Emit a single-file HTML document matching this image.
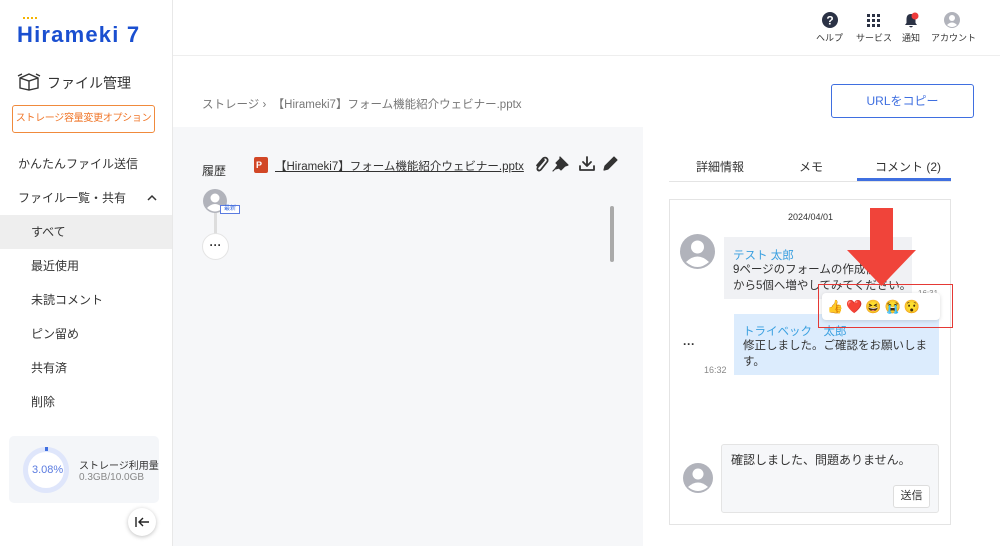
<!DOCTYPE html>
<html><head><meta charset="utf-8"><style>
*{margin:0;padding:0;box-sizing:border-box}
body{width:1000px;height:546px;overflow:hidden;position:relative;background:#fff;font-family:"Liberation Sans","Noto Sans CJK JP",sans-serif;color:#333;font-size:12px}
.a{position:absolute;white-space:nowrap}
.nav{left:0;width:172px;height:34px;line-height:34px;font-size:12px;color:#333}
</style></head><body>
<!-- sidebar -->
<div class="a" style="left:172px;top:0;width:1px;height:546px;background:#e8e8e8"></div>
<div class="a" style="left:17px;top:22px;font-size:22px;font-weight:bold;color:#1a4fd0;letter-spacing:1.2px">Hirameki 7</div>
<div class="a" style="left:23px;top:17px;width:14px;height:4px;border-top:2px dotted #f5b400"></div>
<svg class="a" style="left:17px;top:71px" width="24" height="20" viewBox="0 0 24 20"><path d="M3 7 L12 3 L21 7 L21 17 L12 19 L3 17 Z M3 7 L12 10 L21 7 M12 10 L12 19 M1 5 L5 3 M23 5 L19 3" fill="none" stroke="#333" stroke-width="1.4"/></svg>
<div class="a" style="left:47px;top:73px;font-size:14px;color:#333">ファイル管理</div>
<div class="a" style="left:12px;top:105px;width:143px;height:28px;border:1px solid #f08a3c;border-radius:3px;color:#f0772a;font-size:10px;line-height:26px;text-align:center;letter-spacing:-0.3px">ストレージ容量変更オプション</div>
<div class="a nav" style="top:147px;padding-left:18px">かんたんファイル送信</div>
<div class="a nav" style="top:181px;padding-left:18px">ファイル一覧・共有<svg style="position:absolute;left:147px;top:13px" width="10" height="7"><path d="M1 6 L5 2 L9 6" fill="none" stroke="#333" stroke-width="1.5"/></svg></div>
<div class="a nav" style="top:215px;padding-left:31px;background:#eee">すべて</div>
<div class="a nav" style="top:249px;padding-left:31px">最近使用</div>
<div class="a nav" style="top:283px;padding-left:31px">未読コメント</div>
<div class="a nav" style="top:317px;padding-left:31px">ピン留め</div>
<div class="a nav" style="top:351px;padding-left:31px">共有済</div>
<div class="a nav" style="top:385px;padding-left:31px">削除</div>
<div class="a" style="left:9px;top:436px;width:150px;height:67px;background:#f4f6f9;border-radius:5px"></div>
<div class="a" style="left:23px;top:447px;width:46px;height:46px;border-radius:50%;border:5px solid #dfe6fb;background:#fff"></div>
<div class="a" style="left:45px;top:447px;width:3px;height:4px;background:#3f6fe0"></div>
<div class="a" style="left:32px;top:464px;font-size:11px;color:#5a7be0">3.08%</div>
<div class="a" style="left:79px;top:457px;font-size:10px;color:#333">ストレージ利用量</div>
<div class="a" style="left:79px;top:472px;font-size:10px;color:#888">0.3GB/10.0GB</div>
<div class="a" style="left:128px;top:508px;width:28px;height:28px;border-radius:50%;background:#fff;box-shadow:0 1px 4px rgba(0,0,0,.25)"><svg style="position:absolute;left:7px;top:9px" width="15" height="10"><path d="M1 0 L1 10 M14 5 L4 5 M8 1 L4 5 L8 9" fill="none" stroke="#222" stroke-width="1.4"/></svg></div>
<!-- header -->
<div class="a" style="left:173px;top:55px;width:827px;height:1px;background:#eee"></div>
<svg class="a" style="left:822px;top:12px" width="16" height="16"><circle cx="8" cy="8" r="8" fill="#2b3245"/><text x="8" y="12.5" font-size="12" font-weight="bold" fill="#fff" text-anchor="middle" font-family="Liberation Sans">?</text></svg>
<svg class="a" style="left:867px;top:14px" width="13" height="13" fill="#2b3245"><rect x="0" y="0" width="3" height="3"/><rect x="5" y="0" width="3" height="3"/><rect x="10" y="0" width="3" height="3"/><rect x="0" y="5" width="3" height="3"/><rect x="5" y="5" width="3" height="3"/><rect x="10" y="5" width="3" height="3"/><rect x="0" y="10" width="3" height="3"/><rect x="5" y="10" width="3" height="3"/><rect x="10" y="10" width="3" height="3"/></svg>
<svg class="a" style="left:903px;top:12px" width="16" height="17"><path d="M8 2 C4 2 3.5 5 3.5 8 L3.5 11 L2 13 L14 13 L12.5 11 L12.5 8 C12.5 5 12 2 8 2Z M6 14 Q8 17 10 14Z" fill="#2b3245"/><circle cx="12" cy="4" r="3.5" fill="#ee3b3b"/></svg>
<svg class="a" style="left:944px;top:12px" width="16" height="16"><circle cx="8" cy="8" r="8" fill="#b1b3bb"/><circle cx="8" cy="6" r="3" fill="#fff"/><path d="M3 13 Q8 8 13 13 Q8 17 3 13Z" fill="#fff"/></svg>
<div class="a" style="left:816px;top:31px;font-size:9px;color:#333">ヘルプ</div>
<div class="a" style="left:856px;top:31px;font-size:9px;color:#333">サービス</div>
<div class="a" style="left:902px;top:31px;font-size:9px;color:#333">通知</div>
<div class="a" style="left:931px;top:31px;font-size:9px;color:#333">アカウント</div>
<div class="a" style="left:202px;top:96px;font-size:11.5px;color:#777">ストレージ ›&nbsp; 【Hirameki7】フォーム機能紹介ウェビナー.pptx</div>
<div class="a" style="left:831px;top:84px;width:143px;height:34px;border:1px solid #3f6fe0;border-radius:3px;color:#3f6fe0;font-size:12px;line-height:32px;text-align:center">URLをコピー</div>
<!-- gray panel -->
<div class="a" style="left:173px;top:127px;width:470px;height:419px;background:#f6f7f9"></div>
<div class="a" style="left:202px;top:162px;font-size:12px;color:#333">履歴</div>
<div class="a" style="left:254px;top:157px;width:14px;height:16px;background:#d24726;border-radius:2px;color:#fff;font-size:9px;font-weight:bold;line-height:16px;padding-left:2px">P</div>
<div class="a" style="left:275px;top:158px;font-size:11.5px;color:#333;text-decoration:underline">【Hirameki7】フォーム機能紹介ウェビナー.pptx</div>
<svg class="a" style="left:533px;top:155px" width="86" height="18" fill="none" stroke="#333" stroke-width="1.8" stroke-linecap="round" stroke-linejoin="round">
<path d="M11 5 L5 12 C3 14.5 6 17 8 14.5 L14 7 C16 4.5 13 1 10 3.5 L4 10.5"/>
<path d="M27 2 L35 10 L32 11 L28 15 L26 13 L22 14 L25 10 L23 8 L27 4Z M24 12 L20 16" fill="#333" stroke-width="1.2"/>
<path d="M54 2 L54 11 M50 7 L54 11 L58 7 M47 11 L47 15 L61 15 L61 11"/>
<path d="M71 15 L72 11 L81 2 L84 5 L75 14 Z" fill="#333" stroke-width="1.2"/>
</svg>
<div class="a" style="left:214px;top:205px;width:3px;height:30px;background:#ddd"></div>
<svg class="a" style="left:203px;top:189px" width="24" height="24"><circle cx="12" cy="12" r="12" fill="#b1b3bb"/><circle cx="12" cy="9" r="4.5" fill="#fff"/><path d="M4 19 Q12 11 20 19 Q12 26 4 19Z" fill="#fff"/></svg>
<div class="a" style="left:220px;top:205px;width:20px;height:9px;border:1px solid #5a7be0;background:#fff;font-size:6px;color:#3f6fe0;line-height:7px;text-align:center">最新</div>
<div class="a" style="left:202px;top:233px;width:27px;height:27px;border-radius:50%;background:#fff;border:1px solid #e4e4e4;text-align:center;line-height:22px;font-weight:bold;font-size:12px">···</div>
<div class="a" style="left:610px;top:206px;width:4px;height:56px;background:#aaa;border-radius:2px"></div>
<!-- right panel -->
<div class="a" style="left:696px;top:158px;font-size:12px">詳細情報</div>
<div class="a" style="left:799px;top:158px;font-size:12px">メモ</div>
<div class="a" style="left:875px;top:158px;font-size:12px">コメント (2)</div>
<div class="a" style="left:669px;top:181px;width:282px;height:1px;background:#e4e4e4"></div>
<div class="a" style="left:857px;top:178px;width:94px;height:3px;background:#3f6fe0"></div>
<div class="a" style="left:669px;top:199px;width:282px;height:326px;border:1px solid #e4e4e4"></div>
<div class="a" style="left:788px;top:212px;font-size:9px;color:#333">2024/04/01</div>
<svg class="a" style="left:680px;top:234px" width="35" height="35"><circle cx="17.5" cy="17.5" r="17.5" fill="#b1b3bb"/><circle cx="17.5" cy="13" r="6.5" fill="#fff"/><path d="M6 28 Q17.5 17 29 28 Q17.5 38 6 28Z" fill="#fff"/></svg>
<div class="a" style="left:724px;top:237px;width:188px;height:62px;background:#f0f1f4"></div>
<div class="a" style="left:733px;top:247px;font-size:11.5px;color:#3aa0e0">テスト 太郎</div>
<div class="a" style="left:733px;top:262px;font-size:11.5px;line-height:16px;color:#333">9ページのフォームの作成例<br>から5個へ増やしてみてください。</div>
<div class="a" style="left:918px;top:289px;font-size:8px;color:#888">16:31</div>
<div class="a" style="left:734px;top:314px;width:205px;height:61px;background:#dcecfd"></div>
<div class="a" style="left:743px;top:323px;font-size:11.5px;color:#3aa0e0">トライベック　太郎</div>
<div class="a" style="left:743px;top:338px;font-size:11.5px;line-height:16px;color:#333">修正しました。ご確認をお願いしま<br>す。</div>
<div class="a" style="left:683px;top:337px;font-size:12px;font-weight:bold">···</div>
<div class="a" style="left:704px;top:365px;font-size:9px;color:#888">16:32</div>
<div class="a" style="left:822px;top:293px;width:118px;height:27px;background:#fff;border-radius:4px;box-shadow:0 1px 4px rgba(0,0,0,.15);font-size:13px;line-height:27px;padding-left:5px;letter-spacing:3px">👍❤️😆😭😯</div>
<div class="a" style="left:818px;top:284px;width:135px;height:44px;border:1px solid #e53935"></div>
<svg class="a" style="left:840px;top:208px" width="80" height="80"><path d="M30 0 L53 0 L53 42 L76 42 L41.5 78 L7 42 L30 42 Z" fill="#f0443a"/></svg>
<svg class="a" style="left:683px;top:463px" width="30" height="30"><circle cx="15" cy="15" r="15" fill="#b1b3bb"/><circle cx="15" cy="11" r="5.5" fill="#fff"/><path d="M5 24 Q15 15 25 24 Q15 32 5 24Z" fill="#fff"/></svg>
<div class="a" style="left:721px;top:444px;width:218px;height:69px;background:#f6f7f9;border:1px solid #e4e4e4;border-radius:3px"></div>
<div class="a" style="left:731px;top:451px;font-size:12px;color:#333">確認しました、問題ありません。</div>
<div class="a" style="left:893px;top:485px;width:37px;height:23px;background:#fff;border:1px solid #ddd;border-radius:3px;font-size:11px;line-height:21px;text-align:center">送信</div>
</body></html>
